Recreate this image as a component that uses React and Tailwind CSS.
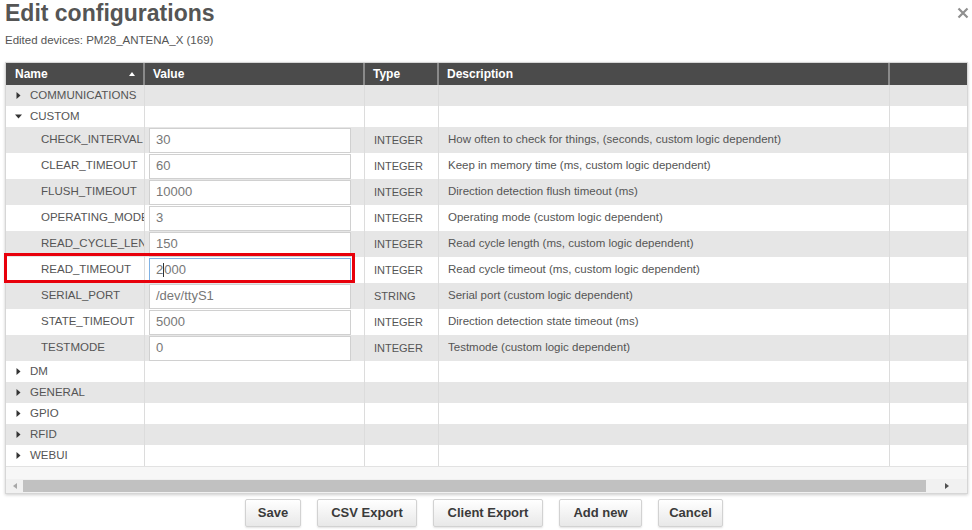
import React from "react";

const GROUPS_TOP = ["COMMUNICATIONS"];
const GROUPS_BOTTOM = ["DM", "GENERAL", "GPIO", "RFID", "WEBUI"];

const CUSTOM_ITEMS = [
  { name: "CHECK_INTERVAL", value: "30", type: "INTEGER", desc: "How often to check for things, (seconds, custom logic dependent)" },
  { name: "CLEAR_TIMEOUT", value: "60", type: "INTEGER", desc: "Keep in memory time (ms, custom logic dependent)" },
  { name: "FLUSH_TIMEOUT", value: "10000", type: "INTEGER", desc: "Direction detection flush timeout (ms)" },
  { name: "OPERATING_MODE", value: "3", type: "INTEGER", desc: "Operating mode (custom logic dependent)" },
  { name: "READ_CYCLE_LENGTH", value: "150", type: "INTEGER", desc: "Read cycle length (ms, custom logic dependent)" },
  { name: "READ_TIMEOUT", value: "2000", type: "INTEGER", desc: "Read cycle timeout (ms, custom logic dependent)", focused: true },
  { name: "SERIAL_PORT", value: "/dev/ttyS1", type: "STRING", desc: "Serial port (custom logic dependent)" },
  { name: "STATE_TIMEOUT", value: "5000", type: "INTEGER", desc: "Direction detection state timeout (ms)" },
  { name: "TESTMODE", value: "0", type: "INTEGER", desc: "Testmode (custom logic dependent)" },
];

const COLS = "grid grid-cols-[139px_220px_74px_451px_77px]";

const Caret = ({ open }) => (
  <svg width="7" height="7" viewBox="0 0 7 7" className="shrink-0">
    {open ? <polygon points="0,1.5 7,1.5 3.5,5.5" fill="#333" /> : <polygon points="1.5,0 5.5,3.5 1.5,7" fill="#333" />}
  </svg>
);

const GroupRow = ({ label, open, shade }) => (
  <div className={`${COLS} h-[21px] ${shade ? "bg-[#e6e6e6]" : "bg-white"}`}>
    <div className="flex items-center gap-[8px] pl-[9px] border-r border-[#dcdcdc] text-[11.5px] text-[#555]">
      <Caret open={open} />
      <span>{label}</span>
    </div>
    <div className="border-r border-[#dcdcdc]" />
    <div className="border-r border-[#dcdcdc]" />
    <div className="border-r border-[#dcdcdc]" />
    <div />
  </div>
);

const ItemRow = ({ item, shade }) => (
  <div className={`${COLS} h-[26px] ${shade ? "bg-[#e6e6e6]" : "bg-white"}`}>
    <div className="flex items-center pl-[35px] border-r border-[#dcdcdc] text-[11.5px] text-[#555] overflow-hidden whitespace-nowrap">
      <span className="block w-[103px] overflow-hidden">{item.name}</span>
    </div>
    <div className="flex items-center pl-[4px] border-r border-[#dcdcdc]">
      <div
        className={`flex items-center w-[202px] h-[25px] bg-white px-[6px] text-[13px] text-[#777] border ${
          item.focused ? "border-[#7fb2e5]" : "border-[#d0d0d0]"
        }`}
      >
        {item.focused ? (
          <>
            <span>2</span>
            <span className="inline-block w-px h-[14px] bg-[#333]" />
            <span>000</span>
          </>
        ) : (
          item.value
        )}
      </div>
    </div>
    <div className="flex items-center pl-[9px] border-r border-[#dcdcdc] text-[11px] text-[#555]">{item.type}</div>
    <div className="flex items-center pl-[9px] border-r border-[#dcdcdc] text-[11.5px] text-[#555] whitespace-nowrap">
      {item.desc}
    </div>
    <div />
  </div>
);

const Button = ({ children, w }) => (
  <button
    className={`h-[28px] ${w} border border-[#d2d2d2] rounded-[2px] bg-gradient-to-b from-white to-[#e8e8e8] shadow-[0_1px_2px_rgba(0,0,0,0.12)] text-[13px] font-bold text-[#3a3a3a]`}
  >
    {children}
  </button>
);

export default function App() {
  let i = 0;
  return (
    <div className="relative w-[972px] h-[530px] overflow-hidden bg-white font-['Liberation_Sans',Arial,sans-serif]">
      <div className="flex items-start justify-between pl-[5px] pr-[3px]">
        <h1 className="text-[23px] leading-[26px] font-bold text-[#555]">Edit configurations</h1>
        <svg width="12" height="12" viewBox="0 0 12 12" className="mt-[7px]">
          <path d="M1.5 1.5 L10.5 10.5 M10.5 1.5 L1.5 10.5" stroke="#8f8f8f" strokeWidth="2.2" />
        </svg>
      </div>
      <p className="pl-[5px] mt-[8px] text-[11.5px] leading-[12px] text-[#555]">Edited devices: PM28_ANTENA_X (169)</p>

      <div className="mt-[16px] ml-[5px] w-[963px] border border-[#d6d6d6] shadow-[0_1px_3px_rgba(0,0,0,0.2)]">
        <div className={`${COLS} h-[22px] bg-[#4b4b4b] text-white text-[12px] font-bold`}>
          <div className="flex items-center justify-between pl-[9px] pr-[8px] border-r-2 border-[#8a8a8a]">
            <span>Name</span>
            <svg width="6" height="4" viewBox="0 0 6 4">
              <polygon points="0,4 3,0 6,4" fill="#fff" />
            </svg>
          </div>
          <div className="flex items-center pl-[8px] border-r-2 border-[#8a8a8a]">Value</div>
          <div className="flex items-center pl-[8px] border-r-2 border-[#8a8a8a]">Type</div>
          <div className="flex items-center pl-[8px] border-r-2 border-[#8a8a8a]">Description</div>
          <div />
        </div>

        {GROUPS_TOP.map((g) => (
          <GroupRow key={g} label={g} shade={i++ % 2 === 0} />
        ))}
        <GroupRow label="CUSTOM" open shade={i++ % 2 === 0} />
        {CUSTOM_ITEMS.map((it) => (
          <ItemRow key={it.name} item={it} shade={i++ % 2 === 0} />
        ))}
        {GROUPS_BOTTOM.map((g) => (
          <GroupRow key={g} label={g} shade={i++ % 2 === 0} />
        ))}

        <div className="h-[13px] bg-[#f7f7f7] border-t border-[#e2e2e2]" />
        <div className="flex items-center h-[14px] bg-[#f1f1f1]">
          <div className="w-[17px] flex justify-center">
            <svg width="4" height="6" viewBox="0 0 4 6">
              <polygon points="4,0 0,3 4,6" fill="#a8a8a8" />
            </svg>
          </div>
          <div className="w-[903px] h-[12px] bg-[#c1c1c1]" />
          <div className="flex-1 flex justify-center">
            <svg width="4" height="6" viewBox="0 0 4 6">
              <polygon points="0,0 4,3 0,6" fill="#505050" />
            </svg>
          </div>
        </div>
      </div>

      <div className="flex justify-center gap-[16px] mt-[5px] pr-[4px]">
        <Button w="w-[56px]">Save</Button>
        <Button w="w-[100px]">CSV Export</Button>
        <Button w="w-[110px]">Client Export</Button>
        <Button w="w-[83px]">Add new</Button>
        <Button w="w-[65px]">Cancel</Button>
      </div>

      <div className="absolute left-[4px] top-[253px] w-[351px] h-[30px] border-[3px] border-[#e8000b]" />
    </div>
  );
}
